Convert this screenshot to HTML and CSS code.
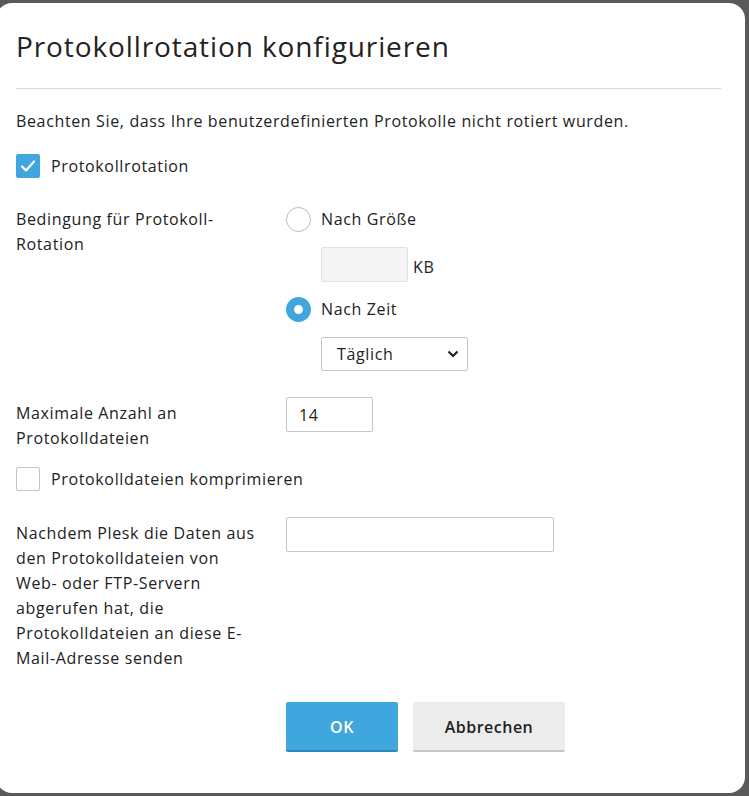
FILE: index.html
```html
<!DOCTYPE html>
<html>
<head>
    <title>Protokollrotation konfigurieren</title>
    <link rel="stylesheet" href="styles.css">
</head>
<body>
    <div class="dialog">
        <h1>Protokollrotation konfigurieren</h1>
        <hr class="sep">

        <p class="note">Beachten Sie, dass Ihre benutzerdefinierten Protokolle nicht rotiert wurden.</p>

        <label class="check-row">
            <span class="checkbox checked">
                <svg width="16" height="14" viewBox="0 0 16 14"><path d="M2 7.5 L6 11.5 L14 2.5" fill="none" stroke="#fff" stroke-width="2.2" stroke-linecap="round" stroke-linejoin="round"/></svg>
            </span>
            <span>Protokollrotation</span>
        </label>

        <div class="row row-cond">
            <div class="label">Bedingung für Protokoll-Rotation</div>
            <div class="controls">
                <label class="radio-row">
                    <span class="radio"></span>
                    <span>Nach Größe</span>
                </label>
                <div class="size-row">
                    <input type="text" class="input input-small" disabled>
                    <span>KB</span>
                </div>
                <label class="radio-row">
                    <span class="radio checked"></span>
                    <span>Nach Zeit</span>
                </label>
                <div class="select">
                    <span>Täglich</span>
                    <svg width="12" height="8" viewBox="0 0 12 8"><path d="M1.5 1.5 L6 6 L10.5 1.5" fill="none" stroke="#222" stroke-width="2.2"/></svg>
                </div>
            </div>
        </div>

        <div class="row row-max">
            <div class="label label-pad">Maximale Anzahl an Protokolldateien</div>
            <div class="controls">
                <input type="text" class="input input-small" value="14">
            </div>
        </div>

        <label class="check-row check-compress">
            <span class="checkbox"></span>
            <span>Protokolldateien komprimieren</span>
        </label>

        <div class="row row-mail">
            <div class="label label-pad">Nachdem Plesk die Daten aus den Protokolldateien von Web- oder FTP-Servern abgerufen hat, die Protokolldateien an diese E-Mail-Adresse senden</div>
            <div class="controls">
                <input type="text" class="input input-wide">
            </div>
        </div>

        <div class="buttons">
            <button class="btn btn-primary">OK</button>
            <button class="btn">Abbrechen</button>
        </div>
    </div>
</body>
</html>
```

FILE: styles.css
```css
body {
    margin: 0;
    padding: 3px 0 0;
    background-color: #5a5a5a;
    font-family: "Open Sans", Arial, sans-serif;
    font-size: 16px;
    line-height: 25px;
    letter-spacing: 0.04em;
    color: #222;
    overflow: hidden;
}

.dialog {
    width: 749px;
    height: 790px;
    margin-left: -4px;
    padding: 25px 24px 0 20px;
    box-sizing: border-box;
    background-color: #fff;
    border-radius: 16px;
}

h1 {
    margin: 0;
    font-size: 28px;
    line-height: 36px;
    font-weight: 400;
    letter-spacing: 0.032em;
    color: #222;
}

.sep {
    margin: 24px 0 0;
    border: none;
    border-top: 1px solid #d6d6e0;
}

.note {
    margin: 20px 0 0;
}

.check-row {
    display: flex;
    align-items: center;
    gap: 11px;
    margin-top: 20px;
    line-height: 24px;
}

.checkbox {
    width: 24px;
    height: 24px;
    box-sizing: border-box;
    border: 1px solid #c4c4c4;
    border-radius: 2px;
    background-color: #fff;
    display: flex;
    align-items: center;
    justify-content: center;
}

.checkbox.checked {
    background-color: #3fa7de;
    border-color: #3fa7de;
}

.row {
    display: grid;
    grid-template-columns: 270px 1fr;
}

.label {
    padding-right: 26px;
}

.row-cond {
    margin-top: 29px;
}

.row-max {
    margin-top: 26px;
}

.row-mail {
    margin-top: 26px;
}

.label-pad {
    padding-top: 4px;
}

.controls {
    display: flex;
    flex-direction: column;
    align-items: flex-start;
    gap: 15px;
}

.radio-row {
    display: flex;
    align-items: center;
    gap: 10px;
    line-height: 25px;
}

.radio {
    width: 25px;
    height: 25px;
    box-sizing: border-box;
    border: 1px solid #bdbdbd;
    border-radius: 50%;
    background-color: #fff;
}

.radio.checked {
    border: 8px solid #3fa7de;
}

.size-row {
    display: flex;
    align-items: center;
    gap: 5px;
    margin-left: 35px;
}

.size-row span {
    padding-top: 5px;
}

.input {
    height: 35px;
    box-sizing: border-box;
    border: 1px solid #c4c4c4;
    border-radius: 2px;
    padding: 0 12px;
    font-family: "Open Sans", Arial, sans-serif;
    font-size: 16px;
    letter-spacing: 0.04em;
    color: #222;
    background-color: #fff;
}

.input:disabled {
    background-color: #f4f4f4;
    border-color: #e2e2e2;
}

.input-small {
    width: 87px;
}

.input-wide {
    width: 268px;
    height: 35px;
}

.select {
    margin-left: 35px;
    width: 147px;
    height: 34px;
    box-sizing: border-box;
    border: 1px solid #c4c4c4;
    border-radius: 2px;
    padding: 0 8px 0 15px;
    display: flex;
    align-items: center;
    justify-content: space-between;
}

.check-compress {
    margin-top: 16px;
}

.buttons {
    display: flex;
    gap: 15px;
    margin: 31px 0 0 270px;
}

.btn {
    height: 50px;
    width: 152px;
    border: none;
    border-bottom: 2px solid #c6c6c6;
    border-radius: 2px;
    background-color: #ececec;
    font-family: "Open Sans", Arial, sans-serif;
    font-size: 16px;
    font-weight: 600;
    letter-spacing: 0.03em;
    color: #222;
    padding: 2px 0 0;
}

.btn-primary {
    width: 112px;
    background-color: #3fa7de;
    border-bottom-color: #2f87b8;
    color: #fff;
}
```
